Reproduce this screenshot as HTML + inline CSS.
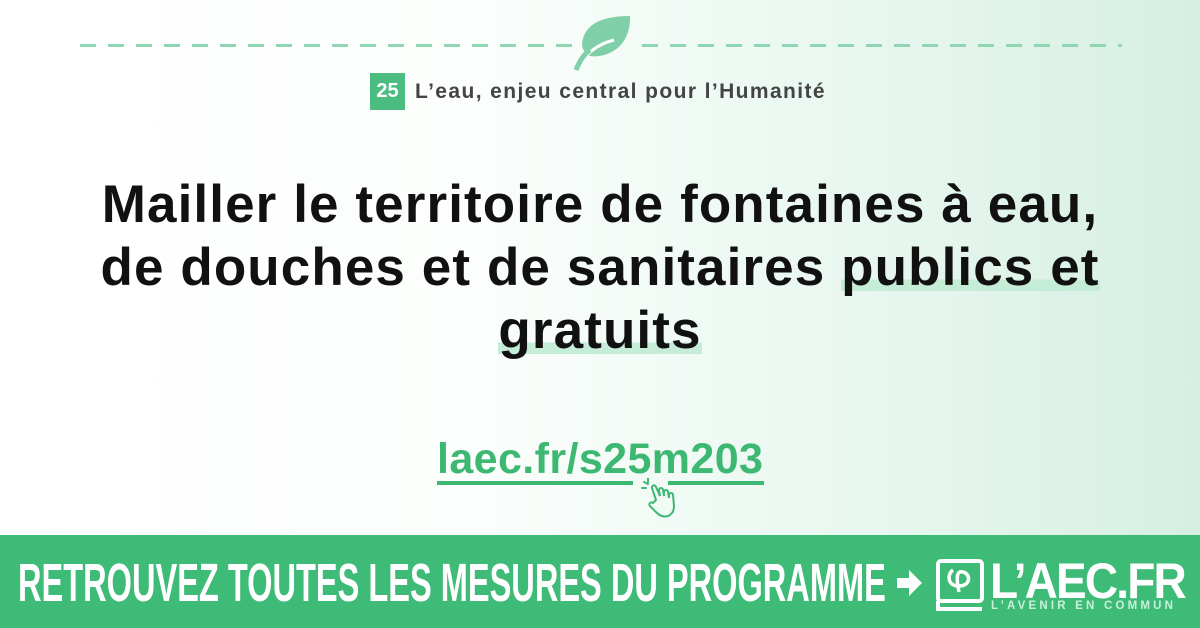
<!DOCTYPE html>
<html><head><meta charset="utf-8"><style>
*{margin:0;padding:0;box-sizing:border-box}
body{width:1200px;height:628px;overflow:hidden;position:relative;font-family:"Liberation Sans",sans-serif;background:linear-gradient(90deg,#fff 0%,#fbfefc 40%,#e6f6ee 75%,#d6efe2 100%)}
.dash{position:absolute;top:44px;height:3px;background:repeating-linear-gradient(90deg,#8fd6b2 0 16px,transparent 16px 28px)}
.tag{position:absolute;top:73px;left:370px;display:flex;align-items:center;gap:10px}
.num{background:#4cbd80;color:#fff;font-weight:bold;font-size:20px;width:35px;height:37px;display:flex;align-items:center;justify-content:center}
.tag span.t{font-size:21px;font-weight:bold;color:#444;letter-spacing:1.4px}
h1{position:absolute;top:173px;left:0;width:1200px;text-align:center;font-size:53px;line-height:63px;font-weight:bold;color:#111;letter-spacing:1.1px}
.hl{background:linear-gradient(transparent 70%,#c5ecd7 70%,#c5ecd7 90%,transparent 90%)}
.link{position:absolute;top:435px;left:437px;font-size:43px;font-weight:bold;color:#3db873;letter-spacing:0.4px}
.ul{position:absolute;top:481px;height:4px;background:#3db873}
.band{position:absolute;left:0;top:535px;width:1200px;height:93px;background:#3dbb77}
.bt{position:absolute;left:18px;top:556px;color:#fff;font-weight:bold;font-size:54px;line-height:54px;transform:scaleX(0.603);transform-origin:left;white-space:nowrap}
.logo{position:absolute;left:990px;top:557px;color:#fff;font-weight:bold;font-size:50px;line-height:48px;letter-spacing:-2px;transform:scaleX(0.92);transform-origin:left;white-space:nowrap}
.sub{position:absolute;left:991px;top:600px;color:#c8f0da;font-weight:bold;font-size:11.5px;letter-spacing:3.2px;white-space:nowrap}
</style></head><body>
<div class="dash" style="left:80px;width:500px"></div>
<div class="dash" style="left:642px;width:480px"></div>
<svg style="position:absolute;left:572px;top:14px" width="60" height="58" viewBox="0 0 60 58"><path d="M58 2 C30 2 12 10 10 30 C10 36 14 40 18 42 C30 44 50 38 56 18 C58 12 58 6 58 2Z" fill="#7fd0a8"/><path d="M4 56 C12 40 26 30 42 26" stroke="#fff" stroke-width="3" fill="none"/><path d="M4 56 C8 46 12 40 18 36" stroke="#7fd0a8" stroke-width="5" fill="none"/></svg>
<div class="tag"><div class="num">25</div><span class="t">L’eau, enjeu central pour l’Humanité</span></div>
<h1>Mailler le territoire de fontaines à eau,<br>de douches et de sanitaires <span class="hl">publics et</span><br><span class="hl">gratuits</span></h1>
<div class="link">laec.fr/s25m203</div>
<div class="ul" style="left:437px;width:196px"></div>
<div class="ul" style="left:668px;width:96px"></div>
<svg style="position:absolute;left:640px;top:478px" width="50" height="42" viewBox="0 0 50 42" fill="none" stroke="#3db873" stroke-width="2" stroke-linecap="round"><path d="M4 4l4 2M8 0v4M2 10l4 0"/><path d="M16 22 L12 10 a2 2 0 0 1 4-1 L20 18 L19 12 a2 2 0 0 1 4 0 L24 18 L24 14 a2 2 0 0 1 4 0 L29 20 L29 17 a2 2 0 0 1 4 0 L34 28 C34 36 28 40 22 38 C18 37 14 32 10 28 a2 2 0 0 1 3-3 Z"/></svg>
<div class="band"></div>
<div class="bt">RETROUVEZ TOUTES LES MESURES DU PROGRAMME</div>
<svg style="position:absolute;left:895px;top:568px" width="28" height="30" viewBox="0 0 28 30"><path d="M2 10h12V2l13 13-13 13v-8H2z" fill="#fff"/></svg>
<svg style="position:absolute;left:935px;top:558px" width="50" height="55" viewBox="0 0 50 55" fill="none" stroke="#fff" stroke-width="4"><rect x="3" y="3" width="44" height="40" rx="3"/><path d="M3 43v8h44"/><path d="M18 12c-6 4-6 16 6 16s12-12 4-14-6 10-4 20" stroke-width="3.5"/></svg>
<div class="logo">L’AEC.FR</div>
<div class="sub">L’AVENIR EN COMMUN</div>
</body></html>
